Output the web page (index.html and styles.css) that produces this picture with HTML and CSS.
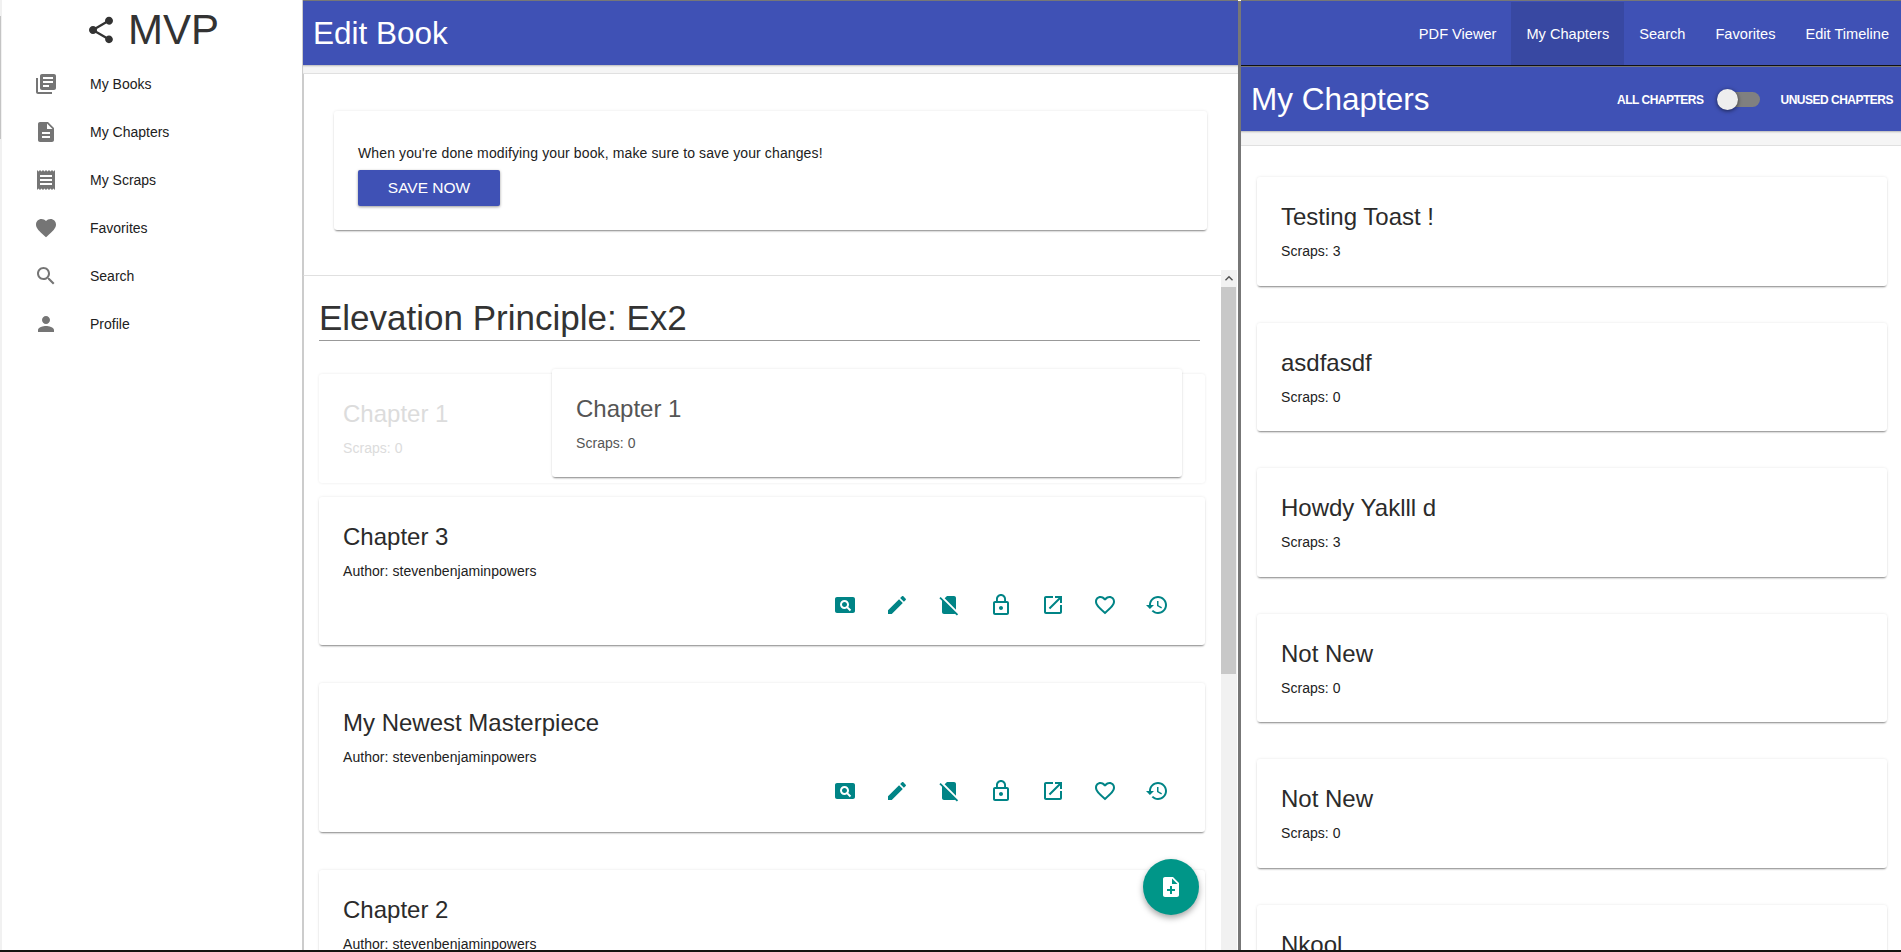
FILE: index.html
```html
<!DOCTYPE html>
<html lang="en">
<head>
<meta charset="utf-8">
<title>Edit Book</title>
<link rel="stylesheet" href="styles.css">
</head>
<body>
<svg class="defs" xmlns="http://www.w3.org/2000/svg" aria-hidden="true">
  <symbol id="i-share" viewBox="0 0 24 24"><path d="M18 16.08c-.76 0-1.44.3-1.96.77L8.91 12.7c.05-.23.09-.46.09-.7s-.04-.47-.09-.7l7.05-4.11c.54.5 1.25.81 2.04.81 1.66 0 3-1.34 3-3s-1.34-3-3-3-3 1.34-3 3c0 .24.04.47.09.7L8.04 9.81C7.5 9.31 6.79 9 6 9c-1.66 0-3 1.34-3 3s1.34 3 3 3c.79 0 1.5-.31 2.04-.81l7.12 4.16c-.05.21-.08.43-.08.65 0 1.61 1.31 2.92 2.92 2.92 1.61 0 2.92-1.31 2.92-2.92s-1.31-2.92-2.92-2.92z"/></symbol>
  <symbol id="i-books" viewBox="0 0 24 24"><path d="M4 6H2v14c0 1.1.9 2 2 2h14v-2H4V6zm16-4H8c-1.1 0-2 .9-2 2v12c0 1.1.9 2 2 2h12c1.1 0 2-.9 2-2V4c0-1.1-.9-2-2-2zm-1 9H9V9h10v2zm-4 4H9v-2h6v2zm4-8H9V5h10v2z"/></symbol>
  <symbol id="i-doc" viewBox="0 0 24 24"><path d="M14 2H6c-1.1 0-1.99.9-1.99 2L4 20c0 1.1.89 2 1.99 2H18c1.1 0 2-.9 2-2V8l-6-6zm2 16H8v-2h8v2zm0-4H8v-2h8v2zm-3-5V3.5L18.5 9H13z"/></symbol>
  <symbol id="i-receipt" viewBox="0 0 24 24"><path d="M18 17H6v-2h12v2zm0-4H6v-2h12v2zm0-4H6V7h12v2zM3 22l1.5-1.5L6 22l1.5-1.5L9 22l1.5-1.5L12 22l1.5-1.5L15 22l1.5-1.5L18 22l1.5-1.5L21 22V2l-1.5 1.5L18 2l-1.5 1.5L15 2l-1.5 1.5L12 2l-1.5 1.5L9 2 7.5 3.5 6 2 4.5 3.5 3 2v20z"/></symbol>
  <symbol id="i-heart" viewBox="0 0 24 24"><path d="M12 21.35l-1.45-1.32C5.4 15.36 2 12.28 2 8.5 2 5.42 4.42 3 7.5 3c1.74 0 3.41.81 4.5 2.09C13.09 3.81 14.76 3 16.5 3 19.58 3 22 5.42 22 8.5c0 3.78-3.4 6.86-8.55 11.54L12 21.35z"/></symbol>
  <symbol id="i-search" viewBox="0 0 24 24"><path d="M15.5 14h-.79l-.28-.27C15.41 12.59 16 11.11 16 9.5 16 5.91 13.09 3 9.5 3S3 5.91 3 9.5 5.91 16 9.5 16c1.61 0 3.09-.59 4.23-1.57l.27.28v.79l5 4.99L20.49 19l-4.99-5zm-6 0C7.01 14 5 11.99 5 9.5S7.01 5 9.5 5 14 7.01 14 9.5 11.99 14 9.5 14z"/></symbol>
  <symbol id="i-person" viewBox="0 0 24 24"><path d="M12 12c2.21 0 4-1.79 4-4s-1.79-4-4-4-4 1.79-4 4 1.79 4 4 4zm0 2c-2.67 0-8 1.34-8 4v2h16v-2c0-2.66-5.33-4-8-4z"/></symbol>
  <symbol id="i-pageview" viewBox="0 0 24 24"><path d="M11.5 9C10.12 9 9 10.12 9 11.5s1.12 2.5 2.5 2.5 2.5-1.12 2.5-2.5S12.88 9 11.5 9zM20 4H4c-1.1 0-2 .9-2 2v12c0 1.1.9 2 2 2h16c1.1 0 2-.9 2-2V6c0-1.1-.9-2-2-2zm-3.21 14.21l-2.91-2.91c-.69.44-1.51.7-2.38.7C9.01 16 7 13.99 7 11.5S9.01 7 11.5 7 16 9.01 16 11.5c0 .88-.26 1.69-.7 2.39l2.91 2.9-1.42 1.42z"/></symbol>
  <symbol id="i-edit" viewBox="0 0 24 24"><path d="M3 17.25V21h3.75L17.81 9.94l-3.75-3.75L3 17.25zM20.71 7.04c.39-.39.39-1.02 0-1.41l-2.34-2.34c-.39-.39-1.02-.39-1.41 0l-1.83 1.83 3.75 3.75 1.83-1.83z"/></symbol>
  <symbol id="i-nosim" viewBox="0 0 24 24"><path d="M18.99 5c0-1.1-.89-2-1.99-2h-7L7.66 5.34 19 16.68 18.99 5zM3.65 3.88L2.38 5.15 5 7.77V19c0 1.1.9 2 2 2h10.01c.35 0 .67-.1.96-.26l1.88 1.88 1.27-1.27L3.65 3.88z"/></symbol>
  <symbol id="i-lock" viewBox="0 0 24 24"><path d="M12 17c1.1 0 2-.9 2-2s-.9-2-2-2-2 .9-2 2 .9 2 2 2zm6-9h-1V6c0-2.76-2.24-5-5-5S7 3.24 7 6v2H6c-1.1 0-2 .9-2 2v10c0 1.1.9 2 2 2h12c1.1 0 2-.9 2-2V10c0-1.1-.9-2-2-2zM8.9 6c0-1.71 1.39-3.1 3.1-3.1s3.1 1.39 3.1 3.1v2H8.9V6zM18 20H6V10h12v10z"/></symbol>
  <symbol id="i-open" viewBox="0 0 24 24"><path d="M19 19H5V5h7V3H5c-1.11 0-2 .9-2 2v14c0 1.1.89 2 2 2h14c1.1 0 2-.9 2-2v-7h-2v7zM14 3v2h3.59l-9.83 9.83 1.41 1.41L19 6.41V10h2V3h-7z"/></symbol>
  <symbol id="i-heart-o" viewBox="0 0 24 24"><path d="M16.5 3c-1.74 0-3.41.81-4.5 2.09C10.91 3.81 9.24 3 7.5 3 4.42 3 2 5.42 2 8.5c0 3.78 3.4 6.86 8.55 11.54L12 21.35l1.45-1.32C18.6 15.36 22 12.28 22 8.5 22 5.42 19.58 3 16.5 3zm-4.4 15.55l-.1.1-.1-.1C7.14 14.24 4 11.39 4 8.5 4 6.5 5.5 5 7.5 5c1.54 0 3.04.99 3.57 2.36h1.87C13.46 5.99 14.96 5 16.5 5c2 0 3.5 1.5 3.5 3.5 0 2.89-3.14 5.74-7.9 10.05z"/></symbol>
  <symbol id="i-history" viewBox="0 0 24 24"><path d="M13 3c-4.97 0-9 4.03-9 9H1l3.89 3.89.07.14L9 12H6c0-3.87 3.13-7 7-7s7 3.13 7 7-3.13 7-7 7c-1.93 0-3.68-.79-4.94-2.06l-1.42 1.42C8.27 19.99 10.51 21 13 21c4.97 0 9-4.03 9-9s-4.03-9-9-9zm-1 5v5l4.28 2.54.72-1.21-3.5-2.08V8H12z"/></symbol>
  <symbol id="i-noteadd" viewBox="0 0 24 24"><path d="M14 2H6c-1.1 0-1.99.9-1.99 2L4 20c0 1.1.89 2 1.99 2H18c1.1 0 2-.9 2-2V8l-6-6zm2 14h-3v3h-2v-3H8v-2h3v-3h2v3h3v2zm-3-7V3.5L18.5 9H13z"/></symbol>
  <symbol id="i-up" viewBox="0 0 24 24"><path d="M7.41 15.41L12 10.83l4.59 4.58L18 14l-6-6-6 6z"/></symbol>
</svg>

<div class="app">
  <aside class="sidebar">
    <div class="edge"><div class="edge-thumb"></div></div>
    <div class="side-main">
      <div class="brand">
        <svg class="brand-icon"><use href="#i-share"/></svg>
        <span class="brand-name">MVP</span>
      </div>
      <nav class="side-nav">
        <a class="side-item"><svg class="icon"><use href="#i-books"/></svg><span>My Books</span></a>
        <a class="side-item"><svg class="icon"><use href="#i-doc"/></svg><span>My Chapters</span></a>
        <a class="side-item"><svg class="icon"><use href="#i-receipt"/></svg><span>My Scraps</span></a>
        <a class="side-item"><svg class="icon"><use href="#i-heart"/></svg><span>Favorites</span></a>
        <a class="side-item"><svg class="icon"><use href="#i-search"/></svg><span>Search</span></a>
        <a class="side-item"><svg class="icon"><use href="#i-person"/></svg><span>Profile</span></a>
      </nav>
    </div>
  </aside>

  <main class="editor">
    <header class="bar editor-bar"><h1 class="bar-title">Edit Book</h1></header>
    <div class="strip"></div>
    <section class="save">
      <div class="card save-card">
        <p class="save-text">When you're done modifying your book, make sure to save your changes!</p>
        <button class="btn" type="button">SAVE NOW</button>
      </div>
    </section>
    <div class="lower">
      <div class="scroller">
        <h2 class="book-title">Elevation Principle: Ex2</h2>
        <div class="ghost-wrap">
          <div class="card chapter ghost">
            <h3 class="card-title">Chapter 1</h3>
            <p class="card-sub">Scraps: 0</p>
          </div>
          <div class="card chapter dragged">
            <h3 class="card-title">Chapter 1</h3>
            <p class="card-sub">Scraps: 0</p>
          </div>
        </div>
        <article class="card chapter book-chapter">
          <h3 class="card-title">Chapter 3</h3>
          <p class="card-sub">Author: stevenbenjaminpowers</p>
          <div class="actions">
            <svg class="icon"><use href="#i-pageview"/></svg>
            <svg class="icon"><use href="#i-edit"/></svg>
            <svg class="icon"><use href="#i-nosim"/></svg>
            <svg class="icon"><use href="#i-lock"/></svg>
            <svg class="icon"><use href="#i-open"/></svg>
            <svg class="icon"><use href="#i-heart-o"/></svg>
            <svg class="icon"><use href="#i-history"/></svg>
          </div>
        </article>
        <article class="card chapter book-chapter">
          <h3 class="card-title">My Newest Masterpiece</h3>
          <p class="card-sub">Author: stevenbenjaminpowers</p>
          <div class="actions">
            <svg class="icon"><use href="#i-pageview"/></svg>
            <svg class="icon"><use href="#i-edit"/></svg>
            <svg class="icon"><use href="#i-nosim"/></svg>
            <svg class="icon"><use href="#i-lock"/></svg>
            <svg class="icon"><use href="#i-open"/></svg>
            <svg class="icon"><use href="#i-heart-o"/></svg>
            <svg class="icon"><use href="#i-history"/></svg>
          </div>
        </article>
        <article class="card chapter book-chapter">
          <h3 class="card-title">Chapter 2</h3>
          <p class="card-sub">Author: stevenbenjaminpowers</p>
        </article>
      </div>
      <div class="scrollbar">
        <div class="scroll-btn"><svg class="scroll-arrow"><use href="#i-up"/></svg></div>
        <div class="scroll-thumb"></div>
      </div>
    </div>
    <button class="fab" type="button" aria-label="Add chapter"><svg class="icon"><use href="#i-noteadd"/></svg></button>
  </main>

  <div class="divider"></div>

  <section class="panel">
    <nav class="tabs">
      <a class="tab">PDF Viewer</a>
      <a class="tab active">My Chapters</a>
      <a class="tab">Search</a>
      <a class="tab">Favorites</a>
      <a class="tab">Edit Timeline</a>
    </nav>
    <header class="bar panel-bar">
      <h1 class="bar-title">My Chapters</h1>
      <div class="filter">
        <span class="filter-label">ALL CHAPTERS</span>
        <span class="toggle"><span class="toggle-thumb"></span></span>
        <span class="filter-label">UNUSED CHAPTERS</span>
      </div>
    </header>
    <div class="strip panel-strip"></div>
    <div class="chapter-list">
      <article class="card chapter side-chapter"><h3 class="card-title">Testing Toast !</h3><p class="card-sub">Scraps: 3</p></article>
      <article class="card chapter side-chapter"><h3 class="card-title">asdfasdf</h3><p class="card-sub">Scraps: 0</p></article>
      <article class="card chapter side-chapter"><h3 class="card-title">Howdy Yaklll d</h3><p class="card-sub">Scraps: 3</p></article>
      <article class="card chapter side-chapter"><h3 class="card-title">Not New</h3><p class="card-sub">Scraps: 0</p></article>
      <article class="card chapter side-chapter"><h3 class="card-title">Not New</h3><p class="card-sub">Scraps: 0</p></article>
      <article class="card chapter side-chapter"><h3 class="card-title">Nkool</h3><p class="card-sub">Scraps: 0</p></article>
    </div>
  </section>
</div>
<div class="floor"></div>
</body>
</html>
```

FILE: styles.css
```css
* { box-sizing: border-box; }

html, body { height: 100%; }

body {
  margin: 0;
  overflow: hidden;
  background: #fff;
  color: #212121;
  font-family: "Liberation Sans", Arial, sans-serif;
  font-size: 14px;
}

.defs { display: none; }

.app {
  display: grid;
  grid-template-columns: 303px 935px 3px 660px;
  height: 950px;
  overflow: hidden;
}

.floor { height: 2px; background: #14130f; }

.icon { width: 24px; height: 24px; fill: currentColor; flex: none; display: block; }

/* Sidebar */
.sidebar {
  display: flex;
  border-right: 1px solid #ccc;
  background: #fff;
}

.edge { width: 2px; background: #f1f1f1; }
.edge-thumb { width: 1px; height: 123px; margin-top: 16px; background: #c4c4c4; }

.side-main { flex: 1; }

.brand {
  display: flex;
  align-items: center;
  justify-content: center;
  gap: 11px;
  height: 60px;
}

.brand-icon { width: 32px; height: 32px; fill: #333; }
.brand-name { font-size: 42px; line-height: 56px; color: #333; }

.side-item {
  display: flex;
  align-items: center;
  gap: 32px;
  height: 48px;
  padding-left: 32px;
  color: #212121;
}

.side-item .icon { color: #757575; }

/* Shared bar */
.bar {
  display: flex;
  align-items: center;
  background: #3f51b5;
  color: #fff;
  height: 65px;
  border-top: 1px solid #777;
}

.bar-title { margin: 0; font-size: 31.5px; font-weight: 400; line-height: 40px; }

.strip {
  height: 9px;
  background: #f5f5f5;
  border-bottom: 1px solid #e0e0e0;
  box-shadow: inset 0 2px 2px -1px rgba(0, 0, 0, .25);
}

/* Editor column */
.editor {
  position: relative;
  display: flex;
  flex-direction: column;
  min-height: 0;
  overflow: hidden;
}

.editor-bar { padding-left: 10px; flex: none; }

.save {
  flex: none;
  height: 202px;
  margin-right: 17px;
  padding: 37px 14px 0 30px;
  border-left: 1px solid #ccc;
  border-bottom: 1px solid #e0e0e0;
}

.card {
  background: #fff;
  border-radius: 3px;
  box-shadow: 0 0 3px rgba(0, 0, 0, .1), 0 2px 2px -1px rgba(0, 0, 0, .45);
}

.save-card { height: 119px; padding: 32px 24px 0; }
.save-text { margin: 0; line-height: 20px; letter-spacing: .12px; }

.btn {
  display: block;
  width: 142px;
  height: 36px;
  margin-top: 7px;
  border: 0;
  border-radius: 2px;
  background: #3f51b5;
  color: #fff;
  font: 400 15.5px "Liberation Sans", Arial, sans-serif;
  box-shadow: 0 1px 3px rgba(0, 0, 0, .4);
}

.lower { flex: 1; display: flex; min-height: 0; }

.scroller {
  flex: 1;
  min-width: 0;
  padding: 22px 16px 0 15px;
  border-left: 1px solid #ccc;
  overflow: hidden;
}

.book-title {
  margin: 0 2px 0 0;
  padding-bottom: 2px;
  border-bottom: 1px solid #999;
  width: 881px;
  font-size: 35px;
  font-weight: 400;
  line-height: 40px;
  color: #333;
}

.ghost-wrap { position: relative; margin-top: 33px; margin-bottom: 14px; }

.chapter { padding: 24px; }
.card-title { margin: 0; font-size: 24px; font-weight: 400; line-height: 32px; color: #2b2b2b; }
.card-sub { margin: 8px 0 0; line-height: 20px; letter-spacing: .05px; }

.ghost { box-shadow: 0 0 3px rgba(0, 0, 0, .09); height: 108.5px; }
.ghost .card-title, .ghost .card-sub { color: #dcdcdc; }

.dragged {
  position: absolute;
  top: -5px;
  left: 233px;
  width: 630px;
  height: 108px;
}
.dragged .card-title, .dragged .card-sub { color: #555; }

.book-chapter { margin-bottom: 38px; padding-bottom: 28.5px; }

.actions {
  display: flex;
  justify-content: flex-end;
  gap: 28px;
  margin-top: 12px;
  padding-right: 12px;
  color: #008486;
}

.scrollbar {
  flex: none;
  width: 16px;
  margin: -6px 1px 0 0;
  background: #f1f1f1;
}

.scroll-btn { display: flex; justify-content: center; height: 17px; }
.scroll-arrow { width: 16px; height: 17px; fill: #505050; }
.scroll-thumb { width: 15px; height: 387px; background: #c8c8c8; }

.fab {
  position: absolute;
  right: 39px;
  bottom: 35px;
  display: flex;
  align-items: center;
  justify-content: center;
  width: 56px;
  height: 56px;
  padding: 0;
  border: 0;
  border-radius: 50%;
  background: #009688;
  color: #fff;
  box-shadow: 0 3px 6px rgba(0, 0, 0, .35);
}

/* Divider */
.divider { background: #777; margin-top: 1px; }

/* Right panel */
.panel { display: flex; flex-direction: column; min-height: 0; overflow: hidden; }

.tabs {
  flex: none;
  display: flex;
  justify-content: flex-end;
  height: 66px;
  margin-right: -3px;
  padding-top: 1px;
  background: #3f51b5;
  border-top: 1px solid #777;
  border-bottom: 1px solid #111;
  color: #fff;
  font-size: 14.6px;
}

.tab { display: flex; align-items: center; padding: 0 15px; }
.tab.active { background: rgba(0, 0, 0, .1); }

.panel-bar { flex: none; justify-content: space-between; padding: 0 8px 0 10px; }

.filter { display: flex; align-items: center; padding-top: 1px; }
.filter-label { font-size: 12px; font-weight: 700; letter-spacing: -.5px; }

.toggle {
  position: relative;
  display: block;
  width: 36px;
  height: 15px;
  margin: 0 20px 0 21px;
  border-radius: 8px;
  background: #808080;
}

.toggle-thumb {
  position: absolute;
  top: -3px;
  left: -7px;
  width: 21px;
  height: 21px;
  border-radius: 50%;
  background: #eee;
  box-shadow: 0 1px 4px rgba(0, 0, 0, .6);
}

.panel-strip { flex: none; height: 15px; }

.chapter-list {
  flex: 1;
  min-height: 0;
  display: flex;
  flex-direction: column;
  gap: 37px;
  padding: 31px 14px 0 16px;
  overflow: hidden;
}

.side-chapter { flex: none; padding-bottom: 24.6px; }
```
